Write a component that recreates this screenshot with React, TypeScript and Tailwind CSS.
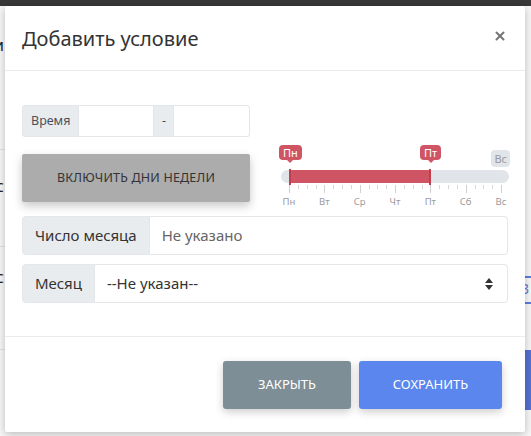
import { X } from 'lucide-react'

const days = ['Пн', 'Вт', 'Ср', 'Чт', 'Пт', 'Сб', 'Вс']

function DaySlider() {
  // 25 ticks, every 4th one is a major tick with a label
  const ticks = Array.from({ length: 25 }, (_, i) => i)
  return (
    <div className="w-[230px] pt-[3px] font-['Noto_Sans',sans-serif]">
      {/* bubbles */}
      <div className="relative h-[22px]">
        <div className="absolute left-[-2px] top-0 flex flex-col items-center">
          <span className="rounded-[4px] bg-[#d05564] px-[4px] text-[11px] leading-[15px] text-white">Пн</span>
          <span className="h-0 w-0 border-x-[3px] border-t-[3px] border-x-transparent border-t-[#d05564]" />
        </div>
        <div className="absolute left-[139px] top-0 flex flex-col items-center">
          <span className="rounded-[4px] bg-[#d05564] px-[4px] text-[11px] leading-[15px] text-white">Пт</span>
          <span className="h-0 w-0 border-x-[3px] border-t-[3px] border-x-transparent border-t-[#d05564]" />
        </div>
        <div className="absolute right-[1px] top-0">
          <span className="rounded-[4px] bg-[#e1e4e9] px-[3px] py-[1px] text-[11px] leading-[15px] text-[#999]">Вс</span>
        </div>
      </div>
      {/* track */}
      <div className="relative mt-[3px] h-[13px] w-[228px] rounded-full bg-[#e1e4e9]">
        <div className="absolute left-[8px] top-0 h-full w-[141px] bg-[#d05564]" />
        <div className="absolute left-[8px] top-[-1px] h-[16px] w-[2px] bg-[#c0404f]" />
        <div className="absolute left-[148px] top-[-1px] h-[16px] w-[2px] bg-[#c0404f]" />
      </div>
      {/* ticks */}
      <div className="relative ml-[8px] mt-[2px] h-[8px] w-[212px]">
        {ticks.map(i => (
          <span
            key={i}
            className={i % 4 === 0 ? 'absolute top-0 h-[8px] w-px bg-[#d0d0d0]' : 'absolute top-0 h-[4px] w-px bg-[#d8d8d8]'}
            style={{ left: `${(i * 212) / 24}px` }}
          />
        ))}
      </div>
      <div className="relative ml-[8px] h-[9px] w-[212px]">
        {days.map((d, i) => (
          <span
            key={d}
            className="absolute top-[3px] -translate-x-1/2 text-[9.5px] leading-[12px] text-[#9a9a9a]"
            style={{ left: `${i * (212 / 6)}px` }}
          >
            {d}
          </span>
        ))}
      </div>
    </div>
  )
}

function SelectArrows() {
  return (
    <svg width="8" height="12" viewBox="0 0 8 12" className="mr-[14px]">
      <path d="M4 0 L8 5 L0 5 Z" fill="#333" />
      <path d="M4 12 L8 7 L0 7 Z" fill="#333" />
    </svg>
  )
}

export default function App() {
  return (
    <div className="relative h-[436px] w-[531px] overflow-hidden bg-white font-['Noto_Sans',sans-serif]">
      {/* page behind the modal */}
      <div className="h-[6px] bg-[#383838]" />
      <div className="flex h-[430px] bg-[#f7f7f7]">
        <div className="w-[8px] text-[16px] text-[#222]">
          <div className="h-[27px]" />
          <div className="-ml-[6px]">и</div>
          <div className="mt-[92px] border-t border-[#e4e4e4] pt-[24px] -ml-[4px]">с</div>
          <div className="mt-[48px] border-t border-[#e4e4e4] pt-[18px] -ml-[4px]">с</div>
          <div className="mt-[60px] border-t border-[#e4e4e4]" />
        </div>
        <div className="flex-1" />
        <div className="w-[10px]">
          <div className="mt-[270px] h-[2px] bg-[#5b7fe0]" />
          <div className="mt-[2px] text-[14px] leading-[18px] text-[#5b7fe0]">З</div>
          <div className="mt-[4px] h-[2px] bg-[#5b7fe0]" />
          <div className="mt-[46px] h-[60px] bg-[#5472d3]" />
        </div>
      </div>

      {/* modal */}
      <div className="absolute left-[5px] top-[6px] flex h-[426px] w-[520px] flex-col rounded-[2px] bg-white shadow-[0_2px_8px_rgba(0,0,0,0.25)]">
        <div className="flex h-[65px] items-center justify-between border-b border-[#e9ecef] pl-[17px] pr-[18px]">
          <h5 className="mt-[2px] text-[20px] text-[#333]">Добавить условие</h5>
          <X size={14} strokeWidth={3.5} className="mb-[4px] text-[#777]" />
        </div>

        <div className="flex flex-col border-b border-[#e9ecef] px-[17px] pb-[33px] pt-[34px]">
          <div className="flex">
            <div className="flex w-[228px] shrink-0 flex-col">
              <div className="flex h-[32px] text-[12.5px] text-[#495057]">
                <div className="flex items-center rounded-l-[3px] border border-[#e4e6ea] bg-[#e9ecef] px-[8px]">Время</div>
                <div className="w-[74px] border-y border-[#e4e6ea] bg-white" />
                <div className="flex w-[21px] items-center justify-center border border-[#e4e6ea] bg-[#e9ecef]">-</div>
                <div className="flex-1 rounded-r-[3px] border-y border-r border-[#e4e6ea] bg-white" />
              </div>
              <button className="mt-[17px] h-[48px] rounded-[2px] bg-[#acacac] text-[12.5px] uppercase tracking-[0.2px] text-[#333] shadow-[0_4px_10px_rgba(0,0,0,0.22)]">
                Включить дни недели
              </button>
            </div>
            <div className="ml-[31px] mt-[37px] shrink-0">
              <DaySlider />
            </div>
          </div>

          <div className="mt-[14px] flex h-[39px] text-[15px]">
            <div className="flex items-center rounded-l-[4px] border border-[#e4e6ea] bg-[#e9ecef] px-[12px] text-[#333]">
              Число месяца
            </div>
            <div className="flex flex-1 items-center rounded-r-[4px] border-y border-r border-[#e4e6ea] px-[12px] text-[#666]">
              Не указано
            </div>
          </div>

          <div className="mt-[9px] flex h-[39px] text-[15px]">
            <div className="flex items-center rounded-l-[4px] border border-[#e4e6ea] bg-[#e9ecef] px-[12px] text-[#333]">
              Месяц
            </div>
            <div className="flex flex-1 items-center justify-between rounded-r-[4px] border-y border-r border-[#e4e6ea] pl-[12px] text-[#333]">
              <span>--Не указан--</span>
              <SelectArrows />
            </div>
          </div>
        </div>

        <div className="flex flex-1 items-center justify-end gap-[8px] pr-[23px]">
          <button className="h-[48px] w-[128px] rounded-[3px] bg-[#7d8e96] text-[13px] uppercase text-white shadow-[0_3px_8px_rgba(0,0,0,0.2)]">
            Закрыть
          </button>
          <button className="h-[48px] w-[143px] rounded-[3px] bg-[#5b86ed] text-[13px] uppercase text-white shadow-[0_3px_8px_rgba(0,0,0,0.2)]">
            Сохранить
          </button>
        </div>
      </div>
    </div>
  )
}
